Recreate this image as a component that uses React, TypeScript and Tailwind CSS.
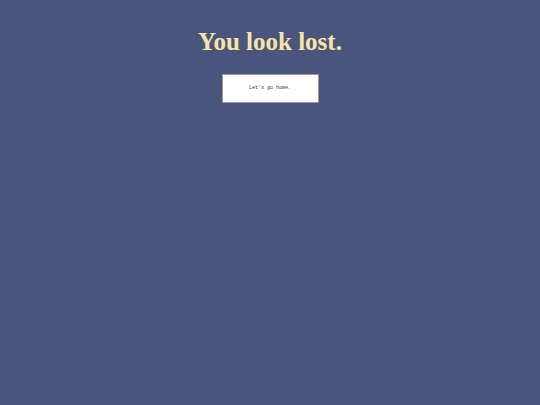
export default function App() {
  return (
    <div className="min-h-[405px] w-full bg-[#4a557e] flex flex-col items-center pt-[26px]">
      <h1 className="text-[25px] font-bold leading-[32px] text-[#f8e4a6] font-['Liberation_Serif','Times_New_Roman',serif]">
        You look lost.
      </h1>
      <button className="mt-[16px] w-[97px] h-[29px] bg-white border border-[#9a9a9a] text-[5px] text-[#333] font-['Liberation_Mono','Courier_New',monospace]">
        Let&apos;s go home.
      </button>
    </div>
  );
}
